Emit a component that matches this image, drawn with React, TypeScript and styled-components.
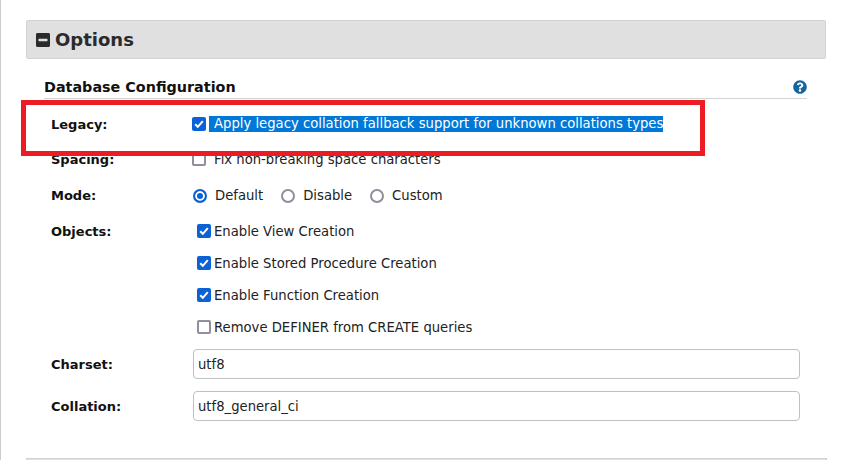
import React, { ReactNode } from 'react';
import styled, { createGlobalStyle } from 'styled-components';
import { FaMinusSquare, FaQuestionCircle } from 'react-icons/fa';

const GlobalStyle = createGlobalStyle`
  html, body {
    margin: 0;
    padding: 0;
    background: #fff;
    overflow: hidden;
  }
  body {
    font-family: 'DejaVu Sans', Verdana, sans-serif;
    font-size: 13.2px;
    color: #222;
  }
`;

const Page = styled.div`
  position: relative;
  width: 850px;
  height: 460px;
  box-sizing: border-box;
  border-left: 1px solid #ccc;
  padding: 20px 24px 0 25px;
  overflow: hidden;
`;
const SectionHeader = styled.div`
  display: flex;
  align-items: center;
  gap: 4px;
  height: 39px;
  box-sizing: border-box;
  padding-left: 8px;
  background: #e0e0e0;
  border: 1px solid #d2d2d2;
  border-radius: 2px;
  color: #2b2b2b;
  font-size: 18px;
  font-weight: bold;
  svg {
    font-size: 16px;
  }
`;
const Body = styled.div`
  padding: 17px 19px 0 18px;
`;
const GroupTitle = styled.div`
  display: flex;
  justify-content: space-between;
  align-items: center;
  height: 22px;
  border-bottom: 1px solid #d4d4d4;
  color: #111;
  font-size: 14.35px;
  font-weight: bold;
  svg {
    font-size: 14px;
    color: #14659f;
  }
`;
const Rows = styled.div`
  padding: 6px 0 0 7px;
`;
const Row = styled.div<{ $height: number; $top?: number }>`
  display: grid;
  grid-template-columns: 141px 1fr;
  align-items: center;
  height: ${(props) => props.$height}px;
  margin-top: ${(props) => props.$top ?? 0}px;
  margin-right: 7px;
`;
const Label = styled.div`
  font-size: 13px;
  font-weight: bold;
  color: #111;
`;
const Options = styled.div`
  display: flex;
  align-items: center;
`;
const Selected = styled.span`
  margin-left: 3px;
  padding: 0 0 0 5px;
  height: 16px;
  line-height: 16px;
  background: #0078d7;
  color: #fff;
`;
const OptionText = styled.span<{ $gap?: number }>`
  margin-left: ${(props) => props.$gap ?? 8}px;
  color: #222;
`;
const Box = styled.span<{ $checked?: boolean; $indent?: number }>`
  display: inline-flex;
  align-items: center;
  justify-content: center;
  width: 14px;
  height: 14px;
  box-sizing: border-box;
  margin-left: ${(props) => props.$indent ?? 0}px;
  border-radius: 2px;
  background: ${(props) => (props.$checked ? '#0b62d6' : '#fff')};
  border: ${(props) => (props.$checked ? 'none' : '2px solid #8f8f9d')};
`;
const Radio = styled.span<{ $checked?: boolean }>`
  display: inline-block;
  flex: none;
  width: 14px;
  height: 14px;
  box-sizing: border-box;
  margin-top: 2px;
  border-radius: 50%;
  border: 2px solid ${(props) => (props.$checked ? '#0b62d6' : '#8f8f9d')};
  background: ${(props) => (props.$checked ? '#0b62d6' : '#fff')};
  box-shadow: ${(props) => (props.$checked ? 'inset 0 0 0 2px #fff' : 'none')};
`;
const RadioGroup = styled(Options)`
  margin-left: 1px;
`;
const RadioOption = styled.div`
  display: flex;
  align-items: center;
  margin-right: 18px;
`;
const TextField = styled.input`
  display: block;
  width: 607px;
  height: 30px;
  box-sizing: border-box;
  margin-left: 1px;
  padding: 0 4px;
  border: 1px solid #c0c0c0;
  border-radius: 4px;
  background: #fff;
  font-family: inherit;
  font-size: 13.2px;
  color: #222;
`;
const FootHeader = styled.div`
  position: absolute;
  left: 25px;
  right: 23px;
  top: 458px;
  height: 20px;
  background: #e0e0e0;
  border: 1px solid #d2d2d2;
`;
// red annotation drawn over the screenshot
const Highlight = styled.div`
  position: absolute;
  left: 20px;
  top: 100px;
  width: 684px;
  height: 56px;
  box-sizing: border-box;
  border: 5px solid #ed1c24;
`;

function Check() {
  return (
    <svg width='14' height='14' viewBox='0 0 14 14'>
      <path d='M3.2 7.2 L5.8 9.8 L10.8 4.2' fill='none' stroke='#fff' strokeWidth='2' />
    </svg>
  );
}

function CheckOption(props: {
  checked?: boolean;
  indent?: number;
  children?: ReactNode;
}) {
  const { checked, indent, children } = props;
  return (
    <Options>
      <Box $checked={checked} $indent={indent}>
        {checked && <Check />}
      </Box>
      {children}
    </Options>
  );
}

export default function App() {
  return (
    <Page>
      <GlobalStyle />
      <SectionHeader>
        <FaMinusSquare />
        Options
      </SectionHeader>
      <Body>
        <GroupTitle>
          Database Configuration
          <FaQuestionCircle />
        </GroupTitle>
        <Rows>
          <Row $height={34} $top={2}>
            <Label>Legacy:</Label>
            <CheckOption checked>
              <Selected>Apply legacy collation fallback support for unknown collations types</Selected>
            </CheckOption>
          </Row>
          <Row $height={36}>
            <Label>Spacing:</Label>
            <CheckOption>
              <OptionText>Fix non-breaking space characters</OptionText>
            </CheckOption>
          </Row>
          <Row $height={36}>
            <Label>Mode:</Label>
            <RadioGroup>
              <RadioOption>
                <Radio $checked />
                <OptionText>Default</OptionText>
              </RadioOption>
              <RadioOption>
                <Radio />
                <OptionText>Disable</OptionText>
              </RadioOption>
              <RadioOption>
                <Radio />
                <OptionText>Custom</OptionText>
              </RadioOption>
            </RadioGroup>
          </Row>
          <Row $height={32} $top={2}>
            <Label>Objects:</Label>
            <CheckOption checked indent={5}>
              <OptionText $gap={3}>Enable View Creation</OptionText>
            </CheckOption>
          </Row>
          <Row $height={32}>
            <span />
            <CheckOption checked indent={5}>
              <OptionText $gap={3}>Enable Stored Procedure Creation</OptionText>
            </CheckOption>
          </Row>
          <Row $height={32}>
            <span />
            <CheckOption checked indent={5}>
              <OptionText $gap={3}>Enable Function Creation</OptionText>
            </CheckOption>
          </Row>
          <Row $height={32}>
            <span />
            <CheckOption indent={5}>
              <OptionText $gap={3}>Remove DEFINER from CREATE queries</OptionText>
            </CheckOption>
          </Row>
          <Row $height={42}>
            <Label>Charset:</Label>
            <TextField defaultValue='utf8' />
          </Row>
          <Row $height={42}>
            <Label>Collation:</Label>
            <TextField defaultValue='utf8_general_ci' />
          </Row>
        </Rows>
      </Body>
      <FootHeader />
      <Highlight />
    </Page>
  );
}
